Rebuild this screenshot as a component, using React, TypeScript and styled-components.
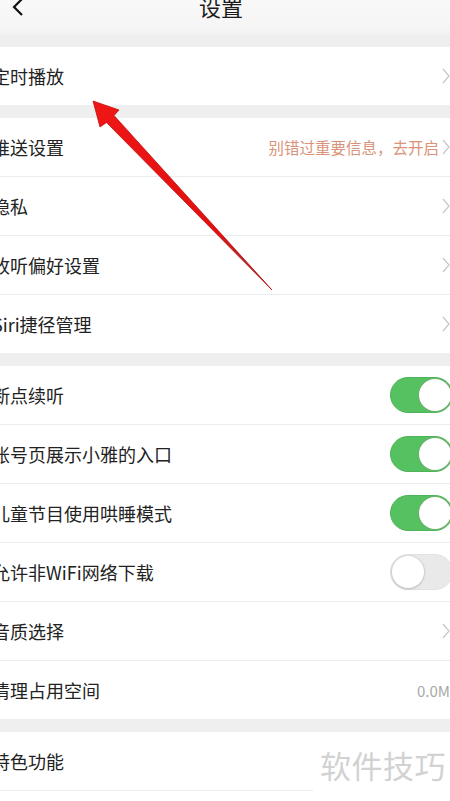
import styled, { createGlobalStyle } from "styled-components";

const GlobalStyle = createGlobalStyle`
  html, body {
    margin: 0;
    padding: 0;
    background: #efefef;
    overflow: hidden;
  }
  body {
    font-family: "Noto Sans CJK SC", "Noto Sans", sans-serif;
  }
`;

const Root = styled.div`
  position: relative;
  width: 450px;
  height: 801px;
  overflow: hidden;
`;

const Screen = styled.div`
  width: 458px;
  margin-left: -8px;
`;

const Header = styled.header`
  height: 35px;
  display: flex;
  justify-content: center;
  align-items: flex-start;
  position: relative;
  background: linear-gradient(#f9f9f9, #f5f5f5 80%, #f1f1f1);
`;

const BackButton = styled.div`
  position: absolute;
  left: 20px;
  top: -3px;
  width: 12px;
  height: 20px;
`;

const Title = styled.h1`
  margin: -7px 0 0;
  font-size: 22px;
  line-height: 26px;
  font-weight: 400;
  color: #1c1c1c;
`;

const Group = styled.section<{ $gap: number }>`
  margin-top: ${(p) => p.$gap}px;
  background: #fff;
`;

const Row = styled.div`
  height: 58px;
  display: flex;
  align-items: center;
  justify-content: space-between;
  & + & {
    border-top: 1px solid #ececec;
  }
`;

const Label = styled.span`
  font-size: 18px;
  color: #222;
  white-space: nowrap;
`;

const Right = styled.div`
  display: flex;
  align-items: center;
  gap: 3px;
`;

const Hint = styled.span<{ $tone: "warn" | "muted" }>`
  font-size: ${(p) => (p.$tone === "warn" ? "15.5px" : "15px")};
  color: ${(p) => (p.$tone === "warn" ? "#d9937a" : "#a8a8a8")};
  white-space: nowrap;
`;

const Chevron = styled.svg`
  width: 8px;
  height: 16px;
  display: block;
`;

const Switch = styled.div<{ $on: boolean }>`
  width: 63px;
  height: 36px;
  margin-right: -3px;
  border-radius: 18px;
  box-sizing: border-box;
  padding: 1px;
  display: flex;
  justify-content: ${(p) => (p.$on ? "flex-end" : "flex-start")};
  background: ${(p) => (p.$on ? "#56c160" : "#e9e9e9")};
  border: 1px solid ${(p) => (p.$on ? "#4fb458" : "#e2e2e2")};
`;

const Knob = styled.div<{ $on: boolean }>`
  width: 32px;
  height: 32px;
  border-radius: 50%;
  background: #fff;
  box-shadow: ${(p) =>
    p.$on ? "0 0 0 1px #6db06f" : "0 1px 3px rgba(0,0,0,0.18), 0 0 0 1px #e0e0e0"};
`;

const Watermark = styled.div`
  position: absolute;
  left: 313px;
  top: 738px;
  right: 0;
  bottom: 0;
  padding: 4px 0 0 7px;
  background: #fff;
  font-size: 31px;
  letter-spacing: 0.5px;
  color: #d2d2d2;
  white-space: nowrap;
`;

const Overlay = styled.svg`
  position: absolute;
  left: 0;
  top: 0;
  pointer-events: none;
`;

function Arrow() {
  return (
    <Chevron viewBox="0 0 8 16">
      <path d="M1 1 L7 8 L1 15" fill="none" stroke="#c9c9c9" strokeWidth="1.3" />
    </Chevron>
  );
}

type Item = {
  label: string;
  kind: "link" | "switch" | "value";
  on?: boolean;
  hint?: string;
};

const groups: { gap: number; items: Item[] }[] = [
  { gap: 12, items: [{ label: "定时播放", kind: "link" }] },
  {
    gap: 13,
    items: [
      { label: "推送设置", kind: "link", hint: "别错过重要信息，去开启" },
      { label: "隐私", kind: "link" },
      { label: "收听偏好设置", kind: "link" },
      { label: "Siri捷径管理", kind: "link" },
    ],
  },
  {
    gap: 13,
    items: [
      { label: "断点续听", kind: "switch", on: true },
      { label: "账号页展示小雅的入口", kind: "switch", on: true },
      { label: "儿童节目使用哄睡模式", kind: "switch", on: true },
      { label: "允许非WiFi网络下载", kind: "switch", on: false },
      { label: "音质选择", kind: "link" },
      { label: "清理占用空间", kind: "value", hint: "0.0M" },
    ],
  },
  {
    gap: 13,
    items: [
      { label: "特色功能", kind: "link" },
      { label: "关于我们", kind: "link" },
    ],
  },
];

function RowRight({ item }: { item: Item }) {
  if (item.kind === "switch") {
    return (
      <Switch $on={!!item.on}>
        <Knob $on={!!item.on} />
      </Switch>
    );
  }
  if (item.kind === "value") {
    return (
      <Right>
        <Hint $tone="muted">{item.hint}</Hint>
      </Right>
    );
  }
  return (
    <Right>
      {item.hint && <Hint $tone="warn">{item.hint}</Hint>}
      <Arrow />
    </Right>
  );
}

export default function App() {
  return (
    <Root>
      <GlobalStyle />
      <Screen>
        <Header>
          <BackButton>
            <svg width="12" height="20" viewBox="0 0 12 20">
              <path d="M10 2 L2 10 L10 18" fill="none" stroke="#111" strokeWidth="2.2" />
            </svg>
          </BackButton>
          <Title>设置</Title>
        </Header>
        {groups.map((g, gi) => (
          <Group key={gi} $gap={g.gap}>
            {g.items.map((item) => (
              <Row key={item.label}>
                <Label>{item.label}</Label>
                <RowRight item={item} />
              </Row>
            ))}
          </Group>
        ))}
      </Screen>
      <Watermark>软件技巧</Watermark>
      <Overlay width="450" height="801" viewBox="0 0 450 801">
        <defs>
          <linearGradient id="shaft" x1="93" y1="101" x2="272" y2="290" gradientUnits="userSpaceOnUse">
            <stop offset="0" stopColor="#f01616" />
            <stop offset="0.7" stopColor="#e01010" />
            <stop offset="1" stopColor="#7a3a40" />
          </linearGradient>
        </defs>
        <polygon
          points="93,101 119,110 114,115.5 272,290 106.5,122.5 100,127"
          fill="url(#shaft)"
          stroke="#c20d0d"
          strokeWidth="0.8"
          strokeLinejoin="round"
        />
      </Overlay>
    </Root>
  );
}
